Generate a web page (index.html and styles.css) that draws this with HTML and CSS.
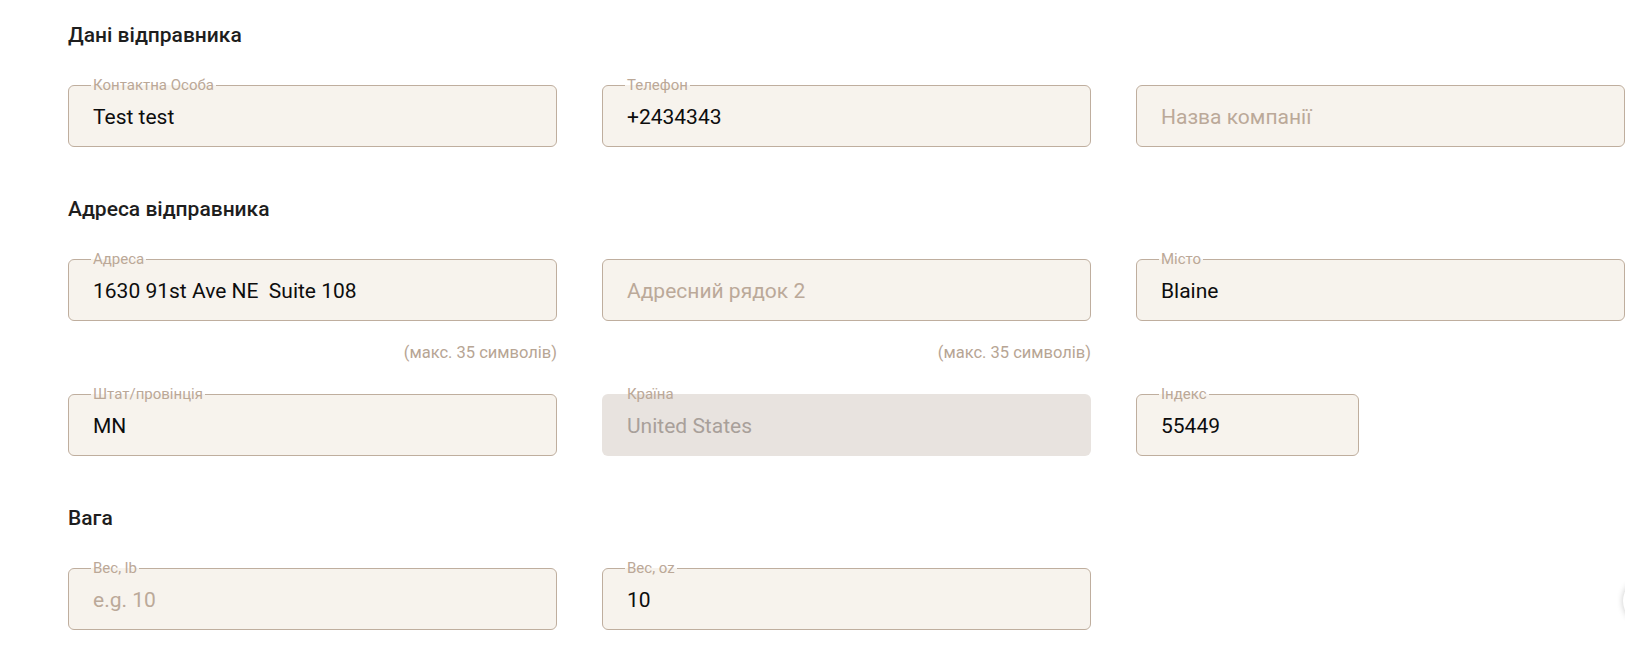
FILE: index.html
```html
<!DOCTYPE html>
<html lang="uk">
<head>
<meta charset="utf-8">
<title>Дані відправника</title>
<link rel="stylesheet" href="styles.css">
</head>
<body>
<main class="form">
  <section class="section">
    <h2 class="section-title">Дані відправника</h2>
    <div class="grid">
      <div class="cell">
        <div class="field">
          <span class="field-label">Контактна Особа</span>
          <span class="field-value">Test test</span>
        </div>
      </div>
      <div class="cell">
        <div class="field">
          <span class="field-label">Телефон</span>
          <span class="field-value">+2434343</span>
        </div>
      </div>
      <div class="cell">
        <div class="field">
          <span class="field-placeholder">Назва компанії</span>
        </div>
      </div>
    </div>
  </section>

  <section class="section">
    <h2 class="section-title">Адреса відправника</h2>
    <div class="grid grid-address">
      <div class="cell">
        <div class="field">
          <span class="field-label">Адреса</span>
          <span class="field-value">1630 91st Ave NE&nbsp; Suite 108</span>
        </div>
        <div class="helper">(макс. 35 символів)</div>
      </div>
      <div class="cell">
        <div class="field">
          <span class="field-placeholder">Адресний рядок 2</span>
        </div>
        <div class="helper">(макс. 35 символів)</div>
      </div>
      <div class="cell">
        <div class="field">
          <span class="field-label">Місто</span>
          <span class="field-value">Blaine</span>
        </div>
      </div>
      <div class="cell">
        <div class="field">
          <span class="field-label">Штат/провінція</span>
          <span class="field-value">MN</span>
        </div>
      </div>
      <div class="cell">
        <div class="field field-disabled">
          <span class="field-label">Країна</span>
          <span class="field-value">United States</span>
        </div>
      </div>
      <div class="cell cell-split">
        <div class="field">
          <span class="field-label">Індекс</span>
          <span class="field-value">55449</span>
        </div>
      </div>
    </div>
  </section>

  <section class="section">
    <h2 class="section-title">Вага</h2>
    <div class="grid">
      <div class="cell">
        <div class="field">
          <span class="field-label">Вес, lb</span>
          <span class="field-placeholder">e.g. 10</span>
        </div>
      </div>
      <div class="cell">
        <div class="field">
          <span class="field-label">Вес, oz</span>
          <span class="field-value">10</span>
        </div>
      </div>
    </div>
  </section>
</main>
<div class="edge-button"></div>
</body>
</html>
```

FILE: styles.css
```css
* {
  box-sizing: border-box;
}

html, body {
  margin: 0;
  background: #ffffff;
  overflow: hidden;
}

body {
  font-family: Roboto, "Noto Sans", Arial, sans-serif;
  color: #111111;
}

.form {
  padding: 23px 0 0 68px;
  display: flex;
  flex-direction: column;
  gap: 50px;
}

.section-title {
  margin: 0 0 38px 0;
  font-size: 21px;
  line-height: 24px;
  font-weight: 500;
  color: #1e1e1e;
}

.grid {
  display: grid;
  grid-template-columns: repeat(3, 489px);
  column-gap: 45px;
  row-gap: 31px;
  align-items: start;
}

.cell {
  display: flex;
  flex-direction: column;
}

.cell-split {
  display: grid;
  grid-template-columns: 1fr 1fr;
  column-gap: 44px;
}

.field {
  position: relative;
  height: 62px;
  border: 1px solid #bfae9e;
  border-radius: 6px;
  background: #f7f3ed;
  display: flex;
  align-items: center;
  padding: 1px 23px 0 24px;
}

.field-label {
  position: absolute;
  top: -10px;
  left: 22px;
  padding: 0 2px;
  font-size: 15px;
  line-height: 18px;
  color: #bba897;
  background: linear-gradient(to bottom, #ffffff 50%, #f7f3ed 50%);
}

.field-value {
  font-size: 21px;
  line-height: 24px;
  color: #0d0d0d;
  white-space: pre;
}

.field-placeholder {
  font-size: 21px;
  line-height: 24px;
  color: #bba999;
}

.field-disabled {
  border-color: transparent;
  background: #e8e3df;
}

.field-disabled .field-label {
  background: none;
  color: #bba897;
}

.field-disabled .field-value {
  color: #a8a09a;
}

.helper {
  margin-top: 22px;
  text-align: right;
  font-size: 16.5px;
  line-height: 20px;
  color: #b7a594;
}

.edge-button {
  position: fixed;
  right: -44px;
  top: 578px;
  width: 46px;
  height: 46px;
  border-radius: 50%;
  background: #ffffff;
  box-shadow: 0 0 6px rgba(0, 0, 0, 0.22);
}
```
